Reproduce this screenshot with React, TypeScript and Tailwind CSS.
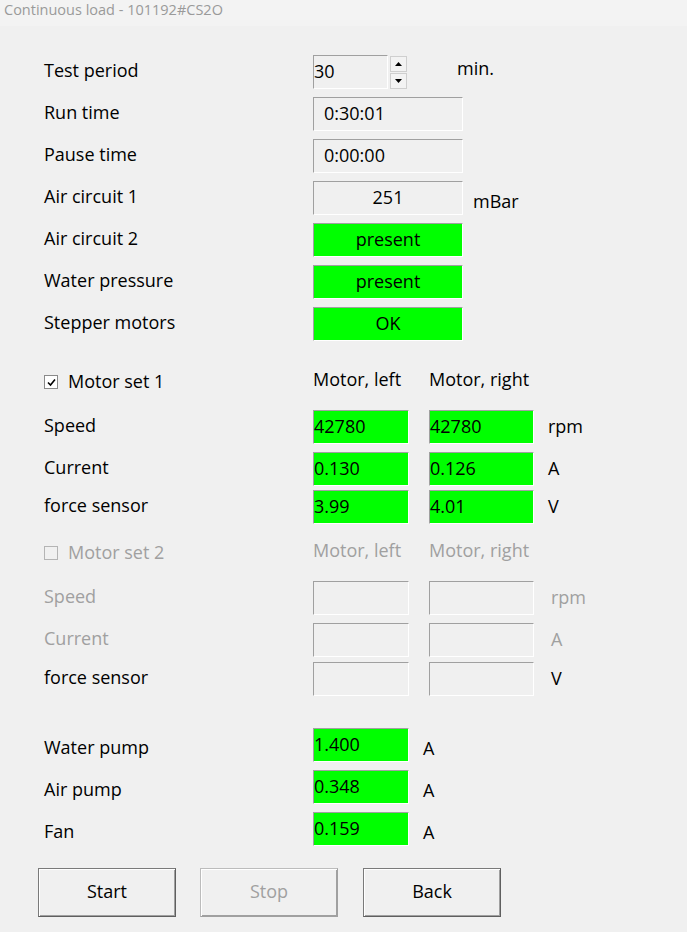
import React from "react";

const green = "bg-[#00ff00]";

function Box({
  value = "",
  w = "w-[150px]",
  tone = "plain",
  align = "left",
}: {
  value?: string;
  w?: string;
  tone?: "plain" | "green";
  align?: "left" | "center" | "inset";
}) {
  const bg = tone === "green" ? green : "bg-[#f0f0f0]";
  const pad =
    align === "center" ? "justify-center" : align === "inset" ? "pl-[10px]" : "pl-0";
  return (
    <div
      className={`${w} h-[34px] ${bg} ${pad} flex items-center border-t border-l border-[#a0a0a0] border-r border-b border-r-white border-b-white text-black pb-[3px] shrink-0`}
    >
      {value}
    </div>
  );
}

function Label({
  text,
  dim = false,
  shift = "pb-[4px]",
}: {
  text: string;
  dim?: boolean;
  shift?: string;
}) {
  return (
    <div className={`w-[269px] shrink-0 ${shift} ${dim ? "text-[#a0a0a0]" : "text-black"}`}>
      {text}
    </div>
  );
}

function Check({ on }: { on: boolean }) {
  return (
    <div
      className={`w-[14px] h-[14px] shrink-0 flex items-center justify-center border ${
        on ? "border-[#8a8a8a] bg-white" : "border-[#b4b4b4] bg-[#f0f0f0]"
      }`}
    >
      {on && (
        <svg width="9" height="9" viewBox="0 0 9 9">
          <path d="M1 4.5 L3.5 7 L8 1.5" fill="none" stroke="#000" strokeWidth="1.6" />
        </svg>
      )}
    </div>
  );
}

function Spin() {
  return (
    <div className="flex flex-col gap-[1px] ml-[2px] mt-[1px] self-start">
      <div className="w-[17px] h-[16px] border border-[#cfcfcf] bg-[#f3f3f3] flex items-center justify-center">
        <svg width="7" height="4" viewBox="0 0 7 4">
          <path d="M0 4 L3.5 0 L7 4 Z" fill="#000" />
        </svg>
      </div>
      <div className="w-[17px] h-[16px] border border-[#cfcfcf] bg-[#f3f3f3] flex items-center justify-center">
        <svg width="7" height="4" viewBox="0 0 7 4">
          <path d="M0 0 L3.5 4 L7 0 Z" fill="#000" />
        </svg>
      </div>
    </div>
  );
}

function Btn({ text, disabled = false }: { text: string; disabled?: boolean }) {
  return (
    <div
      className={`w-[138px] h-[49px] flex items-center justify-center bg-[#f0f0f0] border ${
        disabled
          ? "border-[#bcbcbc] border-b-[#a0a0a0] border-r-[#a0a0a0] text-[#a0a0a0]"
          : "border-[#7a7a7a] border-b-[#5f5f5f] border-r-[#5f5f5f] text-black"
      } shadow-[inset_1px_1px_0_#ffffff,inset_-1px_-1px_0_#a0a0a0] pb-[3px]`}
    >
      {text}
    </div>
  );
}

function MotorRow({
  label,
  left,
  right,
  unit,
  dim = false,
  unitDim = false,
  top,
}: {
  label: string;
  left?: string;
  right?: string;
  unit: string;
  dim?: boolean;
  unitDim?: boolean;
  top: string;
}) {
  const tone = left ? "green" : "plain";
  return (
    <div className={`flex items-center ${top}`}>
      <Label text={label} dim={dim} />
      <Box value={left} w="w-[96px]" tone={tone} />
      <div className="w-[20px]" />
      <Box value={right} w="w-[105px]" tone={tone} />
      <div
        className={`${left ? "ml-[14px]" : "ml-[17px]"} pb-[3px] ${
          unitDim ? "text-[#a0a0a0]" : "text-black"
        }`}
      >
        {unit}
      </div>
    </div>
  );
}

function PumpRow({ label, value, top }: { label: string; value: string; top: string }) {
  return (
    <div className={`flex items-center ${top}`}>
      <Label text={label} shift="pt-[3px]" />
      <Box value={value} w="w-[96px]" tone="green" />
      <div className="ml-[14px] mt-[5px]">A</div>
    </div>
  );
}

export default function App() {
  return (
    <div
      className="w-[687px] h-[932px] bg-[#f0f0f0] text-[18px] leading-none overflow-hidden"
      style={{ fontFamily: '"Open Sans", "Noto Sans", sans-serif' }}
    >
      <div className="h-[26px] bg-[#f3f3f3] pl-[4px] flex items-center text-[14.5px] text-[#9a9a9a] pb-[5px]">
        Continuous load - 101192#CS2O
      </div>

      <div className="pl-[44px] pt-[29px] flex flex-col">
        {/* settings / status */}
        <div className="flex items-center">
          <Label text="Test period" />
          <div className="flex items-center h-[34px]">
            <div className="w-[75px] h-[34px] bg-[#f0f0f0] flex items-center border-t border-l border-[#a0a0a0] border-r-white border-b-white border-r border-b pb-[3px]">
              30
            </div>
            <Spin />
          </div>
          <div className="ml-[50px] pb-[8px]">min.</div>
        </div>
        <div className="flex items-center mt-[8px]">
          <Label text="Run time" />
          <Box value="0:30:01" align="inset" />
        </div>
        <div className="flex items-center mt-[8px]">
          <Label text="Pause time" />
          <Box value="0:00:00" align="inset" />
        </div>
        <div className="flex items-center mt-[8px]">
          <Label text="Air circuit 1" />
          <Box value="251" align="center" />
          <div className="ml-[10px] mt-[5px]">mBar</div>
        </div>
        <div className="flex items-center mt-[8px]">
          <Label text="Air circuit 2" />
          <Box value="present" align="center" tone="green" />
        </div>
        <div className="flex items-center mt-[8px]">
          <Label text="Water pressure" />
          <Box value="present" align="center" tone="green" />
        </div>
        <div className="flex items-center mt-[8px]">
          <Label text="Stepper motors" />
          <Box value="OK" align="center" tone="green" />
        </div>

        {/* motor set 1 */}
        <div className="flex items-center h-[34px] mt-[24px]">
          <div className="w-[269px] flex items-center gap-[10px]">
            <Check on />
            <span className="pb-[2px]">Motor set 1</span>
          </div>
          <div className="w-[116px] pb-[7px]">Motor, left</div>
          <div className="pb-[7px]">Motor, right</div>
        </div>
        <MotorRow label="Speed" left="42780" right="42780" unit="rpm" top="mt-[11px]" />
        <MotorRow label="Current" left="0.130" right="0.126" unit="A" top="mt-[8px]" />
        <MotorRow label="force sensor" left="3.99" right="4.01" unit="V" top="mt-[4px]" />

        {/* motor set 2 */}
        <div className="flex items-center h-[34px] mt-[12px] text-[#a0a0a0]">
          <div className="w-[269px] flex items-center gap-[10px]">
            <Check on={false} />
            <span className="pb-[2px]">Motor set 2</span>
          </div>
          <div className="w-[116px] pb-[7px]">Motor, left</div>
          <div className="pb-[7px]">Motor, right</div>
        </div>
        <MotorRow label="Speed" unit="rpm" dim unitDim top="mt-[11px]" />
        <MotorRow label="Current" unit="A" dim unitDim top="mt-[8px]" />
        <MotorRow label="force sensor" unit="V" top="mt-[5px]" />

        {/* pumps */}
        <PumpRow label="Water pump" value="1.400" top="mt-[32px]" />
        <PumpRow label="Air pump" value="0.348" top="mt-[8px]" />
        <PumpRow label="Fan" value="0.159" top="mt-[8px]" />
      </div>

      <div className="flex pl-[38px] pt-[22px]">
        <Btn text="Start" />
        <div className="ml-[24px]">
          <Btn text="Stop" disabled />
        </div>
        <div className="ml-[25px]">
          <Btn text="Back" />
        </div>
      </div>
    </div>
  );
}
